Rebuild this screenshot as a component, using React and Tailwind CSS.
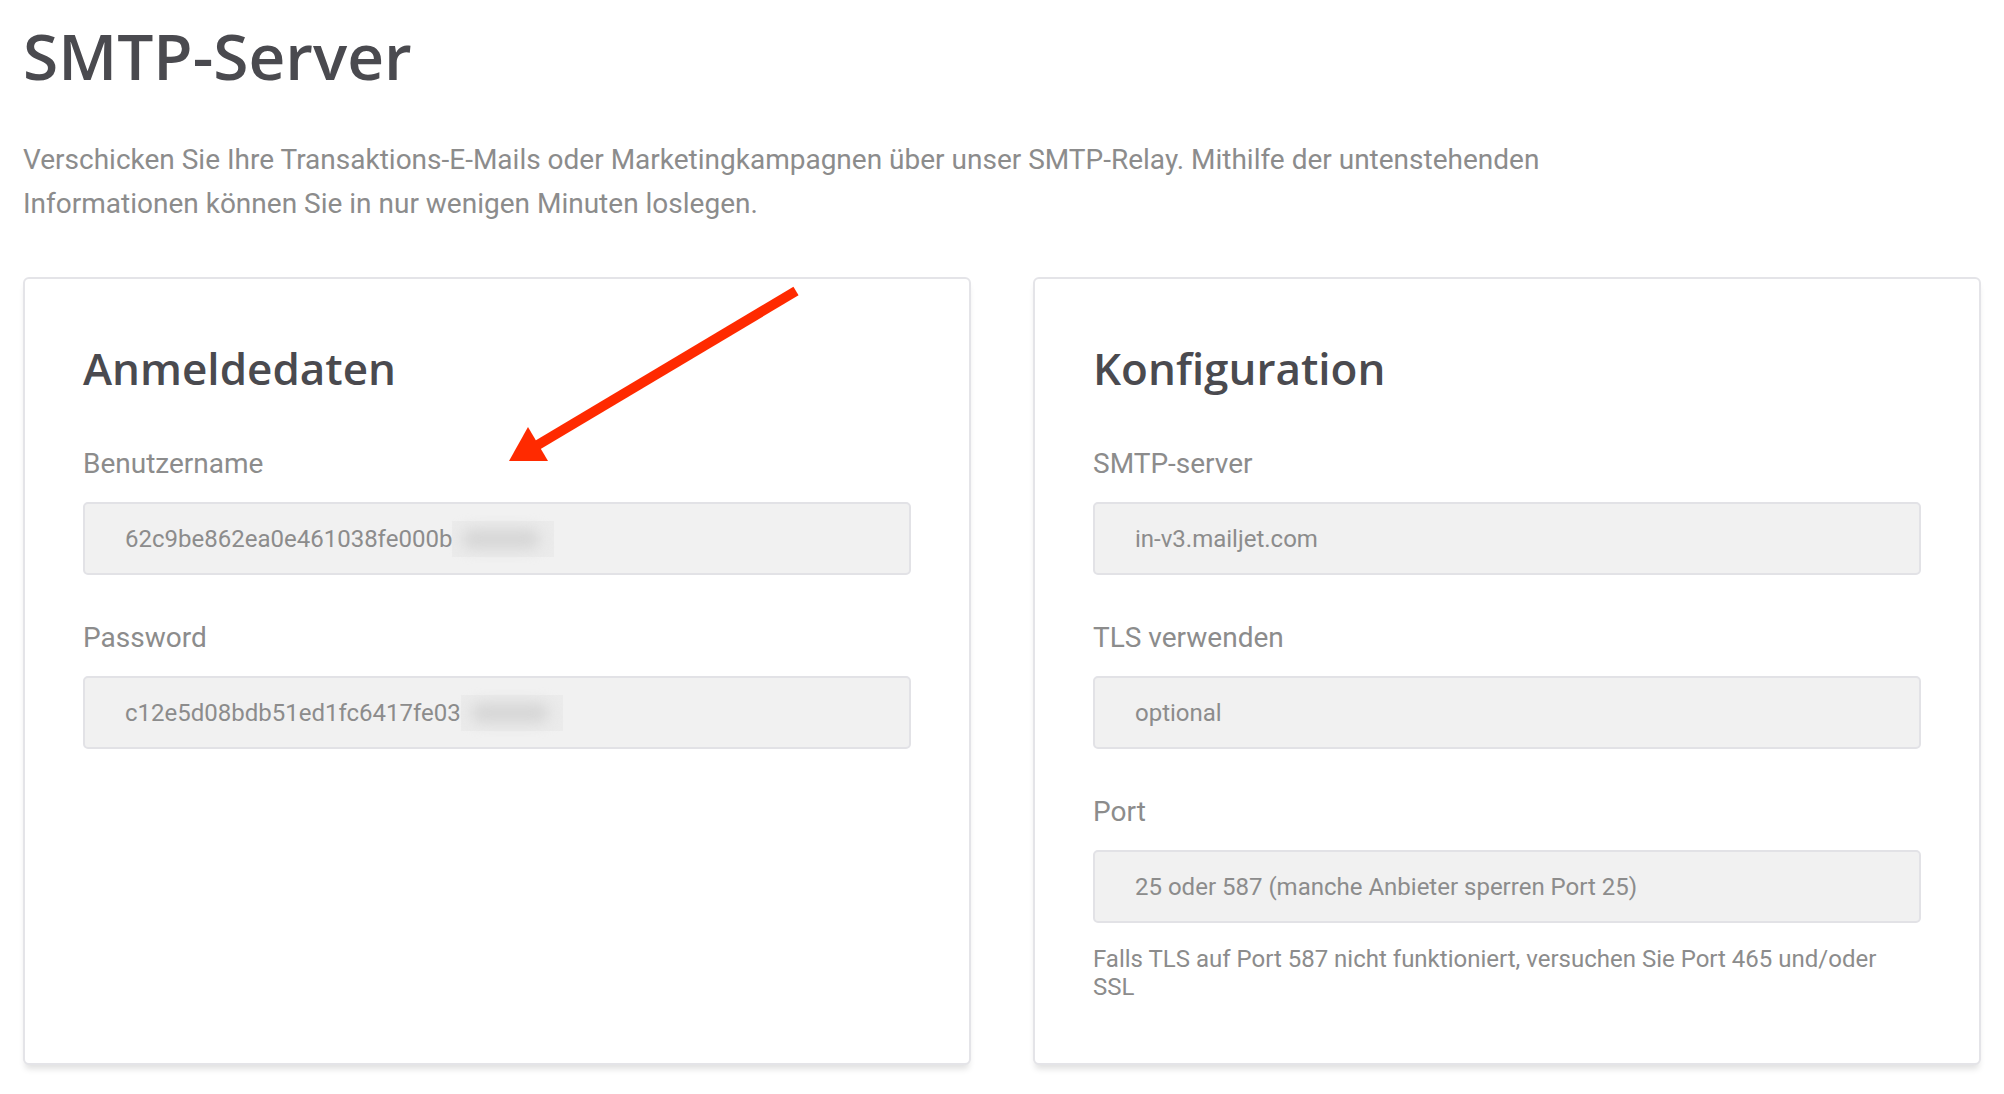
import React from 'react';

const heading = "font-['Open_Sans',sans-serif] font-semibold text-[#4a4a4f]";
const body = "font-['Roboto',sans-serif] text-[#8c8c8c]";

const Redacted = () => (
    <span className="relative inline-block w-[102px] h-[36px] bg-[#ebebeb]">
        <span className="absolute left-[10px] right-[14px] top-[8px] bottom-[8px] rounded-full bg-[#d6d6d6] blur-[7px]" />
    </span>
);

const Field = ({ label, value, hidden }) => (
    <div className="mb-[46px] last:mb-0">
        <div className={`${body} text-[28px] leading-[34px] mb-[21px]`}>{label}</div>
        <div className="flex items-center h-[73px] pl-[40px] bg-[#f1f1f1] border-2 border-[#e2e2e6] rounded-[5px]">
            <span className={`${body} text-[24px] leading-[36px]`}>{value}</span>
            {hidden && <Redacted />}
        </div>
    </div>
);

const Card = ({ title, children }) => (
    <div className="bg-white border-2 border-[#e4e4e8] rounded-[6px] shadow-[0_6px_6px_-2px_rgba(0,0,0,0.12)] px-[58px] pt-[63px] pb-[62px]">
        <h2 className={`${heading} text-[44px] leading-[53px] mb-[52px]`}>{title}</h2>
        {children}
    </div>
);

export default function App() {
    return (
        <div className="relative min-h-screen bg-white px-[23px] pt-[23px]">
            <h1 className={`${heading} text-[64px] leading-[66px]`}>SMTP-Server</h1>
            <p className={`${body} text-[28px] leading-[44px] mt-[49px] max-w-[1560px]`}>
                Verschicken Sie Ihre Transaktions-E-Mails oder Marketingkampagnen über unser SMTP-Relay. Mithilfe der untenstehenden Informationen können Sie in nur wenigen Minuten loslegen.
            </p>

            <div className="grid grid-cols-2 gap-[62px] mt-[51px]">
                <Card title="Anmeldedaten">
                    <Field label="Benutzername" value="62c9be862ea0e461038fe000b" hidden />
                    <Field label="Password" value="c12e5d08bdb51ed1fc6417fe03" hidden />
                </Card>
                <Card title="Konfiguration">
                    <Field label="SMTP-server" value="in-v3.mailjet.com" />
                    <Field label="TLS verwenden" value="optional" />
                    <div>
                        <div className={`${body} text-[28px] leading-[34px] mb-[21px]`}>Port</div>
                        <div className="flex items-center h-[73px] pl-[40px] bg-[#f1f1f1] border-2 border-[#e2e2e6] rounded-[5px]">
                            <span className={`${body} text-[24px] leading-[36px]`}>25 oder 587 (manche Anbieter sperren Port 25)</span>
                        </div>
                        <p className={`${body} text-[24px] leading-[28px] mt-[22px]`}>
                            Falls TLS auf Port 587 nicht funktioniert, versuchen Sie Port 465 und/oder SSL
                        </p>
                    </div>
                </Card>
            </div>

            {/* annotation arrow */}
            <svg
                className="absolute left-[500px] top-[280px] pointer-events-none"
                width="310"
                height="190"
                viewBox="500 280 310 190"
            >
                <line x1="796" y1="291" x2="536" y2="446" stroke="#ff2a00" strokeWidth="10" />
                <polygon points="528,427 509,461 548,461" fill="#ff2a00" />
            </svg>
        </div>
    );
}
